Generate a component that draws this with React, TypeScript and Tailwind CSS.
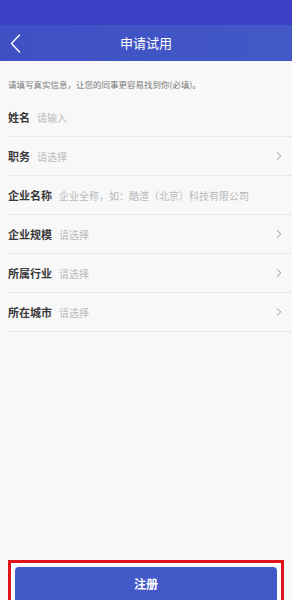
import { ChevronRight } from 'lucide-react';

const rows = [
  { label: '姓名', hint: '请输入', arrow: false },
  { label: '职务', hint: '请选择', arrow: true },
  { label: '企业名称', hint: '企业全称，如：酷渲（北京）科技有限公司', arrow: false },
  { label: '企业规模', hint: '请选择', arrow: true },
  { label: '所属行业', hint: '请选择', arrow: true },
  { label: '所在城市', hint: '请选择', arrow: true },
];

const App = () => {
  return (
    <div
      className="w-[292px] h-[600px] flex flex-col bg-[#f8f8f8] overflow-hidden"
      style={{ fontFamily: '"Noto Sans CJK SC", "Noto Sans", sans-serif' }}
    >
      <div className="h-[25px] bg-[#3d41c7]" />
      <div className="h-[36px] bg-gradient-to-r from-[#3f50c5] to-[#4359c7] flex items-center relative">
        {/* back arrow, tall and thin */}
        <svg className="absolute left-[10px] top-[9px]" width="11" height="19" viewBox="0 0 11 19" fill="none">
          <polyline points="9.5,1 1.5,9.5 9.5,18" stroke="white" strokeWidth="1.4" strokeLinecap="round" strokeLinejoin="round" />
        </svg>
        <h1 className="w-full text-center text-white text-[13px]">申请试用</h1>
      </div>

      <p className="pl-[8px] pt-[15px] pb-[6px] text-[8.5px] text-[#7a7a7a] leading-[16px]">
        请填写真实信息，让您的同事更容易找到你(必填)。
      </p>

      <div className="flex flex-col">
        {rows.map((r) => (
          <div key={r.label} className="h-[39px] ml-[8px] flex items-center border-b border-[#e8e8e8] pr-[6px]">
            <span className="text-[11px] font-bold text-[#3a3a3a]">{r.label}</span>
            <span className="ml-[7px] text-[10px] text-[#b8b8b8] flex-1 whitespace-nowrap">{r.hint}</span>
            {r.arrow && <ChevronRight className="text-[#808080]" size={14} strokeWidth={1.4} />}
          </div>
        ))}
      </div>

      <div className="flex-1" />

      <div className="mx-[8px] h-[40px] border-[3px] border-b-0 border-[#e0141e] pt-[4px] px-[4px] bg-white">
        <button className="w-full h-full rounded-t-[4px] bg-[#4459c8] text-white text-[12px] font-bold flex items-center justify-center">
          注册
        </button>
      </div>
    </div>
  );
};

export default App;
